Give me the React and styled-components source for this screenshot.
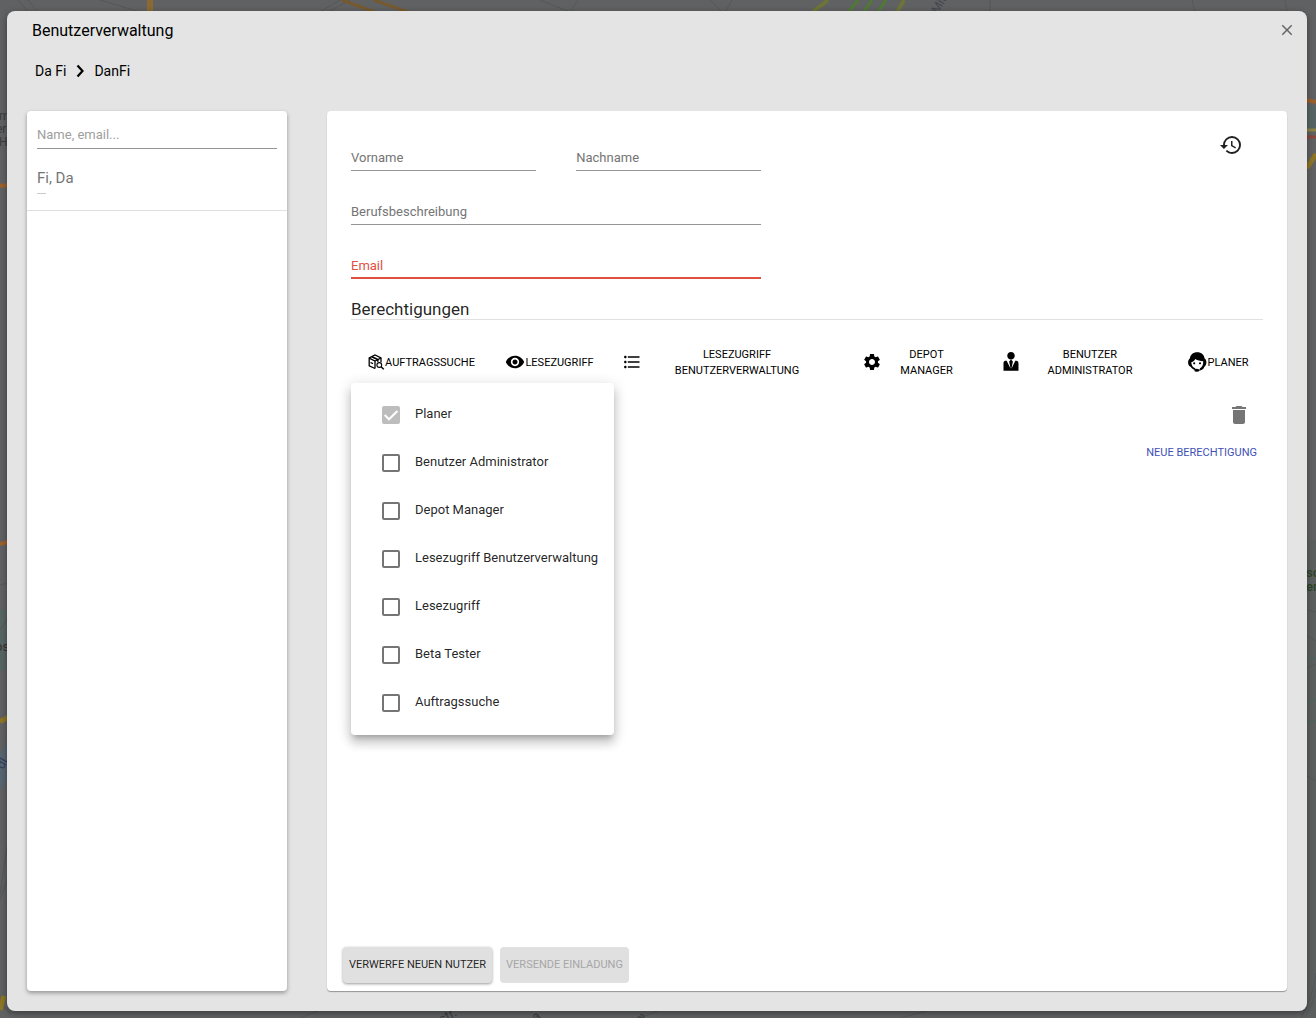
import { useState } from "react";
import styled, { createGlobalStyle } from "styled-components";
import { MdClose, MdDelete, MdFormatListBulleted, MdHistory, MdRemoveRedEye, MdSettings } from "react-icons/md";
import { ImUserTie } from "react-icons/im";

const GlobalStyle = createGlobalStyle`
  * {
    box-sizing: border-box;
  }
  body {
    margin: 0;
    font-family: Roboto, "Liberation Sans", sans-serif;
    font-size: 13px;
    color: rgba(0, 0, 0, 0.87);
    background: #606162;
  }
  button, input {
    font-family: inherit;
  }
`;

//layout ------------

const Backdrop = styled.div`
  position: relative;
  min-height: 100vh;
  padding: 11px 9px 7px 7px;
  display: flex;
  overflow: hidden;
`;

const MapSvg = styled.svg`
  position: absolute;
  inset: 0;
  width: 100%;
  height: 100%;
  fill: none;
`;

const Dialog = styled.div`
  position: relative;
  flex: 1;
  display: flex;
  flex-direction: column;
  padding: 0 20px 20px;
  border-radius: 8px;
  background: #e4e4e4;
  box-shadow: 0 2px 6px rgba(0, 0, 0, 0.4);
`;

const DialogHeader = styled.header`
  display: flex;
  align-items: center;
  justify-content: space-between;
  height: 38px;
  padding-left: 5px;
  color: #000;
`;

const DialogTitle = styled.h1`
  margin: 0;
  font-size: 16px;
  font-weight: 400;
`;

const IconButton = styled.button`
  display: flex;
  align-items: center;
  justify-content: center;
  width: ${(props) => props.$width}px;
  height: ${(props) => props.$height}px;
  margin: 0 0 0 auto;
  padding: 0;
  border: 0;
  background: none;
  color: ${(props) => props.$color};
  cursor: pointer;
`;

const CloseButton = styled(IconButton)`
  margin-right: -12px;
`;

const Breadcrumb = styled.nav`
  display: flex;
  align-items: center;
  gap: 10px;
  height: 44px;
  margin-bottom: 18px;
  padding-left: 8px;
  font-size: 14px;
  color: #000;
  a {
    color: inherit;
    text-decoration: none;
  }
`;

const Columns = styled.div`
  flex: 1;
  display: flex;
  gap: 40px;
`;

//user list ------------

const UserList = styled.aside`
  flex: 0 0 260px;
  border-radius: 4px;
  background: #fff;
  box-shadow: 0 2px 4px rgba(0, 0, 0, 0.35);
`;

const SearchWrap = styled.div`
  padding: 10px 10px 0;
`;

const SearchInput = styled.input`
  width: 100%;
  height: 28px;
  padding: 0;
  border: 0;
  border-bottom: 1px solid #949494;
  outline: none;
  background: none;
  font-size: 13px;
  &::placeholder {
    color: #9e9e9e;
  }
`;

const UserRow = styled.button`
  display: block;
  width: 100%;
  margin-top: 8px;
  padding: 11px 10px 10px;
  border: 0;
  border-bottom: 1px solid #e0e0e0;
  background: none;
  text-align: left;
  cursor: pointer;
`;

const UserName = styled.span`
  display: block;
  font-size: 15px;
  line-height: 20px;
  color: #757575;
`;

const UserMail = styled.span`
  display: block;
  font-size: 11px;
  line-height: 12px;
  color: #bdbdbd;
`;

//user form ------------

const Panel = styled.main`
  flex: 1;
  display: flex;
  flex-direction: column;
  padding: 20px 24px 8px;
  border-radius: 4px;
  background: #fff;
  box-shadow: 0 1px 1px rgba(0, 0, 0, 0.35);
`;

const PanelTop = styled.div`
  display: flex;
  align-items: flex-start;
`;

const Fields = styled.div`
  width: 45%;
  margin-top: 10px;
  display: grid;
  grid-template-columns: 1fr 1fr;
  gap: 24px 40px;
`;

const FieldWrap = styled.label`
  display: grid;
  grid-column: ${(props) => (props.$wide ? "1 / -1" : "auto")};
  color: ${(props) => (props.$error ? "#e0503f" : "#757575")};
`;

const FieldLabel = styled.span`
  grid-area: 1 / 1;
  padding-top: 8px;
  line-height: 18px;
`;

const FieldInput = styled.input`
  grid-area: 1 / 1;
  width: 100%;
  height: 30px;
  padding: 0;
  border: 0;
  border-bottom: ${(props) => (props.$error ? "2px solid #e0503f" : "1px solid #949494")};
  outline: none;
  background: none;
  font-size: 13px;
`;

const SectionTitle = styled.h2`
  margin: 20px 0 18px;
  border-bottom: 1px solid #e0e0e0;
  font-size: 17px;
  font-weight: 400;
  line-height: 20px;
`;

//permissions ------------

const PermissionTable = styled.table`
  width: 100%;
  table-layout: fixed;
  border-collapse: collapse;
  th {
    height: 48px;
    padding: 0;
    font-weight: 400;
  }
  td {
    padding: 5px 0 0;
  }
`;

const Permission = styled.div`
  display: flex;
  align-items: center;
  justify-content: center;
  padding: ${(props) => (props.$spread ? "0 15px" : "0")};
  font-size: 11px;
  line-height: 16px;
  text-transform: uppercase;
  color: #000;
  svg {
    flex: none;
  }
  span {
    flex: ${(props) => (props.$spread ? "1" : "none")};
    padding-top: 2px;
    text-align: center;
  }
`;

const MenuAnchor = styled.div`
  position: relative;
  height: 48px;
`;

const Menu = styled.ul`
  position: absolute;
  top: -8px;
  left: 0;
  z-index: 1;
  margin: 0;
  padding: 8px 0;
  border-radius: 4px;
  background: #fff;
  box-shadow: 0 5px 5px -3px rgba(0, 0, 0, 0.2), 0 8px 10px 1px rgba(0, 0, 0, 0.14),
    0 3px 14px 2px rgba(0, 0, 0, 0.12);
  list-style: none;
`;

const MenuItem = styled.label`
  display: flex;
  align-items: center;
  gap: 15px;
  height: 48px;
  padding: 0 16px 0 31px;
  white-space: nowrap;
  span {
    padding-bottom: 4px;
  }
`;

const CheckWrap = styled.div`
  display: grid;
  svg {
    grid-area: 1 / 1;
    pointer-events: none;
  }
`;

const Checkbox = styled.input`
  grid-area: 1 / 1;
  appearance: none;
  width: 18px;
  height: 18px;
  margin: 0;
  border: 2px solid #757575;
  border-radius: 2px;
  &:checked {
    border-color: #757575;
    background: #757575;
  }
  &:disabled {
    border-color: #bdbdbd;
    background: #bdbdbd;
  }
`;

const LinkButton = styled.button`
  align-self: flex-end;
  height: 26px;
  padding: 0 6px;
  border: 0;
  background: none;
  font-size: 11px;
  text-transform: uppercase;
  color: #3f51b5;
  cursor: pointer;
`;

const Footer = styled.footer`
  display: flex;
  gap: 8px;
  margin-top: auto;
  margin-left: -8px;
`;

const ActionButton = styled.button`
  height: 36px;
  padding: 0 6px 2px;
  border: 0;
  border-radius: 4px;
  background: #e0e0e0;
  box-shadow: 0 1px 3px rgba(0, 0, 0, 0.4);
  font-size: 11px;
  text-transform: uppercase;
  color: rgba(0, 0, 0, 0.87);
  cursor: pointer;
  &:disabled {
    box-shadow: none;
    color: #a6a6a6;
    cursor: default;
  }
`;

//icons ------------

const BoxSearchIcon = () => (
  <svg width="17" height="16" viewBox="0 0 17 16" fill="none" stroke="#000" strokeWidth="1.3">
    <path d="M7 14.500 1.200 11.800V4L7 1l6 2.800v4.400" />
    <path d="M1.200 4.200 7 7l6-3M7 7v7.500M2.500 8.500l2.500 1.200" />
    <path d="m3.800 2.700 6 2.900v2.200" strokeWidth="1.600" />
    <circle cx="11.300" cy="11" r="2.400" strokeWidth="1.100" />
    <path d="m13 12.800 2.800 2.500" strokeWidth="1.500" />
  </svg>
);

const PlannerIcon = () => (
  <svg width="19" height="20" viewBox="0 0 19 20">
    <path
      d="M9.200.2C5 .2 2.200 2.700 1.900 6.600.9 7.200.1 8.700.1 10.500c0 2.200 1 3.900 2.600 4.200 1 1.700 2.500 2.800 4.200 3.300l.6-1.500c-2.600-.9-4.200-3.200-4.200-6.200 2-.6 3.300-1.700 4-3.200 2.200 1.400 4.900 2.100 7.900 2.100.3 3.300-.9 5.900-3.500 7.200l.8 1.400c1.700-.7 2.700-1.700 3.400-3.100 1.500-.4 2.500-2 2.500-4.200 0-1.800-.7-3.300-1.800-3.900C16.300 2.700 13.400.2 9.200.2Z"
      fill="#000"
    />
    <ellipse cx="8.800" cy="18.300" rx="2.500" ry="1.500" fill="#000" />
    <path d="M10.500 18.200c3-.3 5.200-1.900 5.600-4.600" fill="none" stroke="#000" strokeWidth="1.100" />
    <circle cx="6.200" cy="11.300" r="1.100" fill="#000" />
    <circle cx="12" cy="11.300" r="1.100" fill="#000" />
  </svg>
);

const ChevronIcon = () => (
  <svg width="8" height="14" viewBox="0 0 8 14" fill="none" stroke="#000" strokeWidth="2.200">
    <path d="m1.500 1.500 5 5.500-5 5.500" />
  </svg>
);

const CityMap = () => (
  <MapSvg viewBox="0 0 1316 1018" preserveAspectRatio="xMidYMid slice" aria-hidden="true">
    <rect width="1316" height="1018" fill="#606162" />
    <path d="M1300 106h16v24h-16zM0 610v60h10v-60z" fill="#566564" />
    <path d="M1300 540h16v478h-16z" fill="#5b605f" />
    <path d="M0 755 10 735v40L0 790Z" fill="#566570" />
    <g stroke="#555759">
      <path d="M18 0l12 14M28 0l10 12M100 0l40 12M340 0l-20 12M350 0l-22 12M540 0l30 12 8-12M710 0l14 14 8-14M990 0v12M1192 0l3 12M1285 0l2 12" />
      <path d="M1307 610l9 2M1307 636l9 5M1307 668l9-4M1307 776l9 5M1301 1018q12-20 15-45M1305 1018q9-16 11-30M0 585l8-2M0 630l8-12M0 895l8-55M0 900l8-22M0 1000l10 14" />
      <path d="M300 1018l20-8M640 1018l20-8M900 1018l30-8" />
    </g>
    <path d="M150 0v12" stroke="#8b6930" strokeWidth="6" />
    <path d="M342 0l60 22M374 0l90 32" stroke="#76592f" strokeWidth="3" />
    <path d="M828 0l-36 28M904 0l-8 14" stroke="#6e7338" strokeWidth="4" />
    <path d="M858 0l-22 28M872 0l-14 20M886 0l-14 20" stroke="#4e7a35" strokeWidth="3" />
    <path d="M0 186l8-1M0 544l8-2M1307 100l9 2" stroke="#99602c" strokeWidth="4" />
    <path d="M0 721q5-1 8-4M1307 168l9-14M0 1010l4-14" stroke="#8c7525" strokeWidth="5" />
    <path d="M1307 130h9" stroke="#8b8245" strokeWidth="3" />
    <path d="M1307 137h9" stroke="#8a473d" strokeWidth="3" />
    <path d="M1307 660l6-3 3 3M1307 700l4 4 5-5M1307 720l5 3 4-3" stroke="#48655e" />
    <g fill="#3b3d3f" fontSize="13">
      <text x="1306" y="577" fill="#2e4426" fontWeight="500">so</text>
      <text x="1306" y="591" fill="#2e4426" fontWeight="500">er</text>
      <text x="-5" y="651" fill="#39302f">os</text>
      <text x="-1" y="120" fontSize="12">m</text>
      <text x="-4" y="133" fontSize="12">er</text>
      <text x="-1" y="146" fontSize="12">H</text>
      <text transform="translate(938 14) rotate(-60)" fill="#43484f" fontSize="12">Mitte</text>
      <text transform="translate(3 770) rotate(-60)" fill="#35405e">dl</text>
      <text transform="translate(442 1024) rotate(-30)">str.</text>
      <text transform="translate(536 1022) rotate(-40)">a</text>
      <text transform="translate(636 1018) rotate(40)">a</text>
    </g>
  </MapSvg>
);

const permissions = [
  { name: "Auftragssuche", icon: <BoxSearchIcon />, width: 141 },
  { name: "Lesezugriff", icon: <MdRemoveRedEye size={20} />, width: 115 },
  { name: "Lesezugriff Benutzerverwaltung", icon: <MdFormatListBulleted size={20} />, width: 240, spread: true },
  { name: "Depot Manager", icon: <MdSettings size={20} />, width: 139, spread: true },
  { name: "Benutzer Administrator", icon: <ImUserTie size={20} />, width: 188, spread: true },
  { name: "Planer", icon: <PlannerIcon />, width: 89 },
];

const options = [
  "Planer",
  "Benutzer Administrator",
  "Depot Manager",
  "Lesezugriff Benutzerverwaltung",
  "Lesezugriff",
  "Beta Tester",
  "Auftragssuche",
];

const Field = ({ label, name, wide, error, type = "text" }) => (
  <FieldWrap $wide={wide} $error={error}>
    <FieldLabel>{label}</FieldLabel>
    <FieldInput type={type} name={name} $error={error} />
  </FieldWrap>
);

const App = () => {
  const [checked, setChecked] = useState(["Planer"]);

  const toggle = (name) => {
    setChecked((prev) => (prev.includes(name) ? prev.filter((n) => n !== name) : [...prev, name]));
  };

  return (
    <>
      <GlobalStyle />
      <Backdrop>
        <CityMap />
        <Dialog role="dialog" aria-labelledby="dialog-title">
          <DialogHeader>
            <DialogTitle id="dialog-title">Benutzerverwaltung</DialogTitle>
            <CloseButton type="button" aria-label="Schließen" $width={24} $height={24} $color="#666">
              <MdClose size={18} />
            </CloseButton>
          </DialogHeader>
          <Breadcrumb>
            <a href="#company">Da Fi</a>
            <ChevronIcon />
            <a href="#user">DanFi</a>
          </Breadcrumb>
          <Columns>
            <UserList>
              <SearchWrap>
                <SearchInput type="text" placeholder="Name, email..." aria-label="Name, email" />
              </SearchWrap>
              <UserRow type="button">
                <UserName>Fi, Da</UserName>
                <UserMail>---</UserMail>
              </UserRow>
            </UserList>
            <Panel>
              <PanelTop>
                <Fields>
                  <Field label="Vorname" name="firstName" />
                  <Field label="Nachname" name="lastName" />
                  <Field label="Berufsbeschreibung" name="job" wide />
                  <Field label="Email" name="email" type="email" wide error />
                </Fields>
                <IconButton type="button" aria-label="Verlauf" $width={64} $height={28} $color="#212121">
                  <MdHistory size={24} />
                </IconButton>
              </PanelTop>
              <SectionTitle>Berechtigungen</SectionTitle>
              <PermissionTable>
                <colgroup>
                  {permissions.map((p) => (
                    <col key={p.name} width={p.width} />
                  ))}
                </colgroup>
                <thead>
                  <tr>
                    {permissions.map((p) => (
                      <th key={p.name} scope="col">
                        <Permission $spread={p.spread}>
                          {p.icon}
                          <span>{p.name}</span>
                        </Permission>
                      </th>
                    ))}
                  </tr>
                </thead>
                <tbody>
                  <tr>
                    <td colSpan={5}>
                      <MenuAnchor>
                        <Menu>
                          {options.map((name) => (
                            <li key={name}>
                              <MenuItem>
                                <CheckWrap>
                                  <Checkbox
                                    type="checkbox"
                                    checked={checked.includes(name)}
                                    disabled={name === "Planer"}
                                    onChange={() => toggle(name)}
                                  />
                                  {checked.includes(name) && (
                                    <svg width="18" height="18" fill="none" stroke="#fff" strokeWidth="2">
                                      <path d="m2.700 9 4.300 4.300L15.400 5" />
                                    </svg>
                                  )}
                                </CheckWrap>
                                <span>{name}</span>
                              </MenuItem>
                            </li>
                          ))}
                        </Menu>
                      </MenuAnchor>
                    </td>
                    <td>
                      <IconButton type="button" aria-label="Löschen" $width={48} $height={48} $color="#757575">
                        <MdDelete size={24} />
                      </IconButton>
                    </td>
                  </tr>
                </tbody>
              </PermissionTable>
              <LinkButton type="button">Neue Berechtigung</LinkButton>
              <Footer>
                <ActionButton type="button">Verwerfe neuen Nutzer</ActionButton>
                <ActionButton type="button" disabled>
                  Versende Einladung
                </ActionButton>
              </Footer>
            </Panel>
          </Columns>
        </Dialog>
      </Backdrop>
    </>
  );
};

export default App;
